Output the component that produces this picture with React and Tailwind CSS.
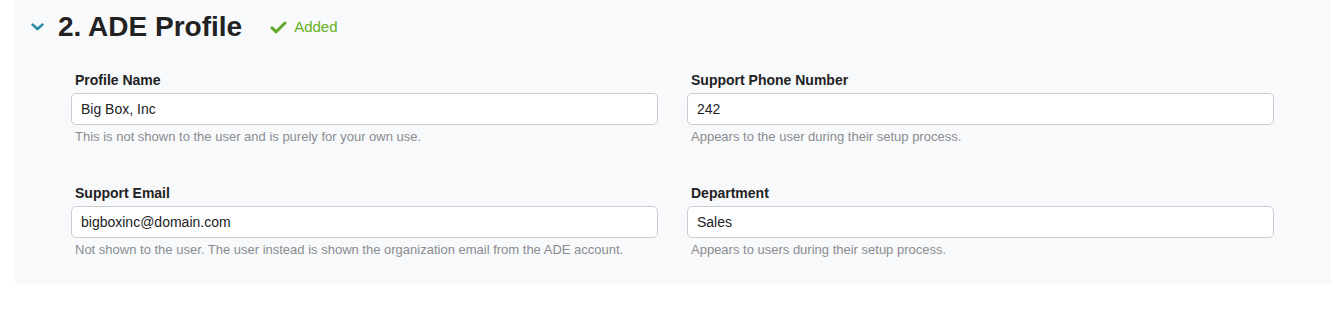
import React from 'react';

const Field = ({ label, value, help }) => (
  <div className="flex flex-col">
    <label className="text-[14px] font-bold text-[#222] leading-[16px] mb-[5px] pl-[4px]">{label}</label>
    <input
      defaultValue={value}
      className="h-[32px] w-full rounded-[5px] border border-[#c9ccd3] bg-white px-[9px] text-[14px] text-[#222] outline-none"
    />
    <p className="mt-[4px] pl-[4px] text-[13px] leading-[15px] text-[#8a8c90]">{help}</p>
  </div>
);

const App = () => {
  return (
    <div className="w-[1335px] h-[312px] bg-white" style={{ fontFamily: '"Liberation Sans", Arial, sans-serif' }}>
      <div className="ml-[15px] mr-[4px] h-[284px] bg-[#f8f9fb]">
        {/* Section header */}
        <div className="flex items-center h-[54px] pl-[16px]">
          <svg width="13" height="8" viewBox="0 0 13 8" className="mr-[14px]">
            <path d="M1.5 1.5 L6.5 6 L11.5 1.5" fill="none" stroke="#2b8ba3" strokeWidth="2.4" strokeLinecap="round" strokeLinejoin="round" />
          </svg>
          <h2 className="text-[28px] font-bold text-[#222] leading-none">2. ADE Profile</h2>
          <div className="flex items-center ml-[28px] text-[15px] text-[#67b022]">
            <svg width="17" height="13" viewBox="0 0 17 13" className="mr-[7px]">
              <path d="M2 6.8 L6.2 10.8 L15 2" fill="none" stroke="#5fa82a" strokeWidth="3" strokeLinecap="round" strokeLinejoin="round" />
            </svg>
            Added
          </div>
        </div>

        {/* Form grid */}
        <div className="grid grid-cols-2 gap-x-[29px] gap-y-[41px] pl-[56px] pr-[57px] pt-[18px]">
          <Field label="Profile Name" value="Big Box, Inc" help="This is not shown to the user and is purely for your own use." />
          <Field label="Support Phone Number" value="242" help="Appears to the user during their setup process." />
          <Field label="Support Email" value="bigboxinc@domain.com" help="Not shown to the user. The user instead is shown the organization email from the ADE account." />
          <Field label="Department" value="Sales" help="Appears to users during their setup process." />
        </div>
      </div>
    </div>
  );
};

export default App;
